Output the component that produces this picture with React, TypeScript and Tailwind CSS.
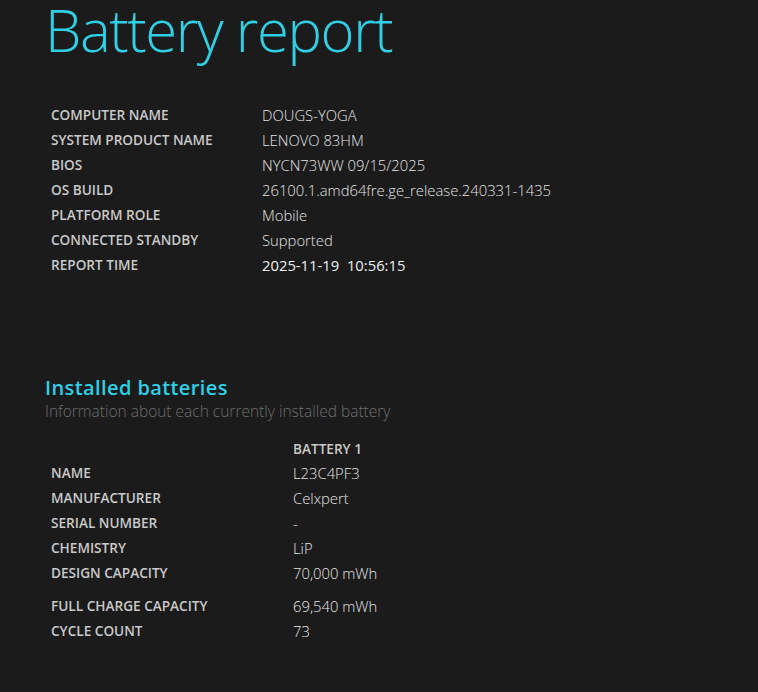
const sys: [string, string, boolean?][] = [
  ["COMPUTER NAME", "DOUGS-YOGA"],
  ["SYSTEM PRODUCT NAME", "LENOVO 83HM"],
  ["BIOS", "NYCN73WW 09/15/2025"],
  ["OS BUILD", "26100.1.amd64fre.ge_release.240331-1435"],
  ["PLATFORM ROLE", "Mobile"],
  ["CONNECTED STANDBY", "Supported"],
  ["REPORT TIME", "2025-11-19\u00a0\u00a010:56:15", true],
];

const battery: [string, string][] = [
  ["NAME", "L23C4PF3"],
  ["MANUFACTURER", "Celxpert"],
  ["SERIAL NUMBER", "-"],
  ["CHEMISTRY", "LiP"],
  ["DESIGN CAPACITY", "70,000 mWh"],
];

const battery2: [string, string][] = [
  ["FULL CHARGE CAPACITY", "69,540 mWh"],
  ["CYCLE COUNT", "73"],
];

export default function App() {
  return (
    <div
      className="min-h-[692px] w-full bg-[#1b1b1b] pl-[45px] text-[#e4e4e4]"
      style={{ fontFamily: '"Open Sans", "Noto Sans", sans-serif' }}
    >
      <h1 className="text-[58px] font-light leading-[60px] tracking-[-1.4px] text-[#2fd0e6]">
        Battery report
      </h1>

      {/* system info */}
      <div className="mt-[43px] pl-[6px]">
        {sys.map(([k, v, strong]) => (
          <div key={k} className="flex h-[25px] items-center">
            <div className="w-[211px] text-[13.6px] font-semibold text-[#c9c9c9]">{k}</div>
            <div
              className={
                strong
                  ? "text-[14.8px] font-normal text-[#f0f0f0]"
                  : "text-[14.8px] font-light text-[#e4e4e4]"
              }
            >
              {v}
            </div>
          </div>
        ))}
      </div>

      {/* installed batteries */}
      <div className="mt-[97px]">
        <h2 className="text-[20px] font-semibold leading-[26px] tracking-[0.4px] text-[#2fd0e6]">
          Installed batteries
        </h2>
        <p className="text-[15.5px] font-light leading-[20px] text-[#6e6e6e]">
          Information about each currently installed battery
        </p>
      </div>

      <div className="mt-[17px] pl-[6px]">
        <div className="flex h-[23px] items-center">
          <div className="w-[242px]" />
          <div className="text-[13.6px] font-semibold text-[#c9c9c9]">BATTERY 1</div>
        </div>
        {battery.map(([k, v]) => (
          <div key={k} className="flex h-[25px] items-center">
            <div className="w-[242px] text-[13.6px] font-semibold text-[#c9c9c9]">{k}</div>
            <div className="text-[14.8px] font-light text-[#e4e4e4]">{v}</div>
          </div>
        ))}
        <div className="h-[8px]" />
        {battery2.map(([k, v]) => (
          <div key={k} className="flex h-[25px] items-center">
            <div className="w-[242px] text-[13.6px] font-semibold text-[#c9c9c9]">{k}</div>
            <div className="text-[14.8px] font-light text-[#e4e4e4]">{v}</div>
          </div>
        ))}
      </div>
    </div>
  );
}
